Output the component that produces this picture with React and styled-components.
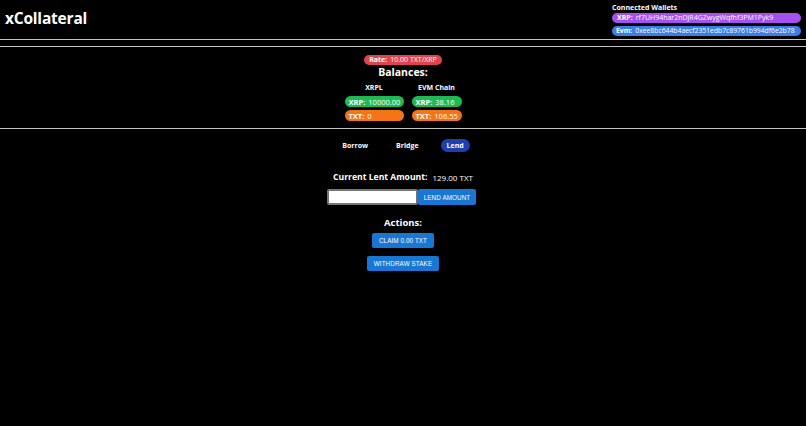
import React from 'react'
import styled, { createGlobalStyle } from 'styled-components'

const GlobalStyle = createGlobalStyle`
  html, body {
    margin: 0;
    padding: 0;
    background: #000;
    color: #fff;
    font-family: 'Open Sans', 'DejaVu Sans', sans-serif;
  }
`

const Header = styled.header`
  display: flex;
  justify-content: space-between;
  align-items: flex-start;
  height: 39px;
  padding: 0 5px;
`

const Title = styled.h1`
  margin: 8px 0 0;
  font-size: 15.5px;
  font-weight: 700;
  line-height: 20px;
  letter-spacing: -0.2px;
`

const Wallets = styled.div`
  display: flex;
  flex-direction: column;
  width: 189px;
  padding-top: 3px;
`

const WalletsTitle = styled.div`
  font-size: 7px;
  font-weight: 700;
  line-height: 9px;
  margin-bottom: 1px;
`

const Pill = styled.div`
  display: inline-flex;
  align-items: center;
  gap: 3px;
  height: ${(p) => p.$h || 10}px;
  padding: 0 ${(p) => p.$px ?? 5}px;
  border-radius: 6px;
  background: ${(p) => p.$bg};
  font-size: ${(p) => p.$fs || 7}px;
  line-height: 10px;
  white-space: nowrap;
  box-sizing: border-box;
  width: ${(p) => (p.$w ? `${p.$w}px` : 'auto')};
  margin-bottom: ${(p) => p.$mb || 0}px;
`

const PillKey = styled.b`
  font-weight: 700;
`

const Rule = styled.hr`
  margin: 0;
  border: none;
  height: 1px;
  background: #c4c4c4;
  margin-bottom: ${(p) => p.$mb || 0}px;
`

const Balances = styled.section`
  display: flex;
  flex-direction: column;
  align-items: center;
  padding-top: 8px;
  height: 73px;
`

const Heading = styled.h2`
  margin: 0;
  font-size: ${(p) => p.$fs || 10.5}px;
  font-weight: 700;
  line-height: 14px;
`

const Columns = styled.div`
  display: flex;
  gap: 8px;
  margin-top: 4px;
`

const Column = styled.div`
  display: flex;
  flex-direction: column;
  align-items: center;
  gap: 3px;
  width: ${(p) => p.$w}px;
`

const ColLabel = styled.div`
  font-size: 7px;
  font-weight: 700;
  line-height: 9px;
  margin-bottom: 1px;
`

const Tabs = styled.nav`
  display: flex;
  justify-content: center;
  align-items: center;
  margin-top: 10px;
`

const Tab = styled.button`
  border: none;
  background: ${(p) => (p.$active ? '#1e3fae' : 'transparent')};
  color: #fff;
  font-family: inherit;
  font-size: 7px;
  font-weight: 700;
  height: 13px;
  padding: 0 6px;
  border-radius: 7px;
  margin: 0 8px;
`

const LentRow = styled.div`
  display: flex;
  justify-content: center;
  align-items: center;
  gap: 5px;
  margin-top: 19px;
`

const LentLabel = styled.span`
  font-size: 8.6px;
  font-weight: 700;
`

const LentValue = styled.span`
  font-size: 8px;
`

const Form = styled.div`
  display: flex;
  justify-content: center;
  margin-top: 6px;
  padding-right: 3px;
`

const Input = styled.input`
  width: 91px;
  height: 16px;
  box-sizing: border-box;
  border: 2px solid #777;
  border-radius: 2px;
  background: #fff;
  outline: none;
`

const Button = styled.button`
  border: none;
  border-radius: 2px;
  background: #1976d2;
  color: #fff;
  font-family: 'Liberation Sans', Arial, sans-serif;
  font-size: 6.3px;
  letter-spacing: 0.1px;
  height: ${(p) => p.$h || 16}px;
  padding: 0 ${(p) => p.$px || 6}px;
  box-shadow: 0 1px 2px rgba(0, 0, 0, 0.4);
`

const Actions = styled.div`
  display: flex;
  flex-direction: column;
  align-items: center;
  margin-top: 11px;
`

const ActionButtons = styled.div`
  display: flex;
  flex-direction: column;
  align-items: center;
  gap: 8px;
  margin-top: 3px;
`

const App = () => (
  <>
    <GlobalStyle />
    <Header>
      <Title>xCollateral</Title>
      <Wallets>
        <WalletsTitle>Connected Wallets</WalletsTitle>
        <Pill $bg="#a550f0" $w={189} $mb={3}>
          <PillKey>XRP:</PillKey> rf7UH94har2nDjR4GZwygWqfhf3PM1Pyk9
        </Pill>
        <Pill $bg="#3b7fe6" $w={189} $px={4} $fs={6.8}>
          <PillKey>Evm:</PillKey> 0xee8bc644b4aecf2351edb7c89761b994df6e2b78
        </Pill>
      </Wallets>
    </Header>
    <Rule $mb={6} />
    <Rule />
    <Balances>
      <Pill $bg="#e0434c">
        <PillKey>Rate:</PillKey> 10.00 TXT/XRP
      </Pill>
      <Heading>Balances:</Heading>
      <Columns>
        <Column $w={59}>
          <ColLabel>XRPL</ColLabel>
          <Pill $bg="#1fb954" $w={59} $h={11} $fs={7.5} $px={4}>
            <PillKey>XRP:</PillKey> 10000.00
          </Pill>
          <Pill $bg="#f47416" $w={59} $h={11} $fs={7.5} $px={4}>
            <PillKey>TXT:</PillKey> 0
          </Pill>
        </Column>
        <Column $w={50}>
          <ColLabel>EVM Chain</ColLabel>
          <Pill $bg="#1fb954" $w={50} $h={11} $fs={7.5} $px={4}>
            <PillKey>XRP:</PillKey> 38.16
          </Pill>
          <Pill $bg="#f47416" $w={50} $h={11} $fs={7.5} $px={4}>
            <PillKey>TXT:</PillKey> 106.55
          </Pill>
        </Column>
      </Columns>
    </Balances>
    <Rule />
    <Tabs>
      <Tab>Borrow</Tab>
      <Tab>Bridge</Tab>
      <Tab $active>Lend</Tab>
    </Tabs>
    <LentRow>
      <LentLabel>Current Lent Amount:</LentLabel>
      <LentValue>129.00 TXT</LentValue>
    </LentRow>
    <Form>
      <Input />
      <Button>LEND AMOUNT</Button>
    </Form>
    <Actions>
      <Heading $fs={9.5}>Actions:</Heading>
      <ActionButtons>
        <Button $h={15} $px={7}>CLAIM 0.00 TXT</Button>
        <Button $h={15} $px={7}>WITHDRAW STAKE</Button>
      </ActionButtons>
    </Actions>
  </>
)

export default App
